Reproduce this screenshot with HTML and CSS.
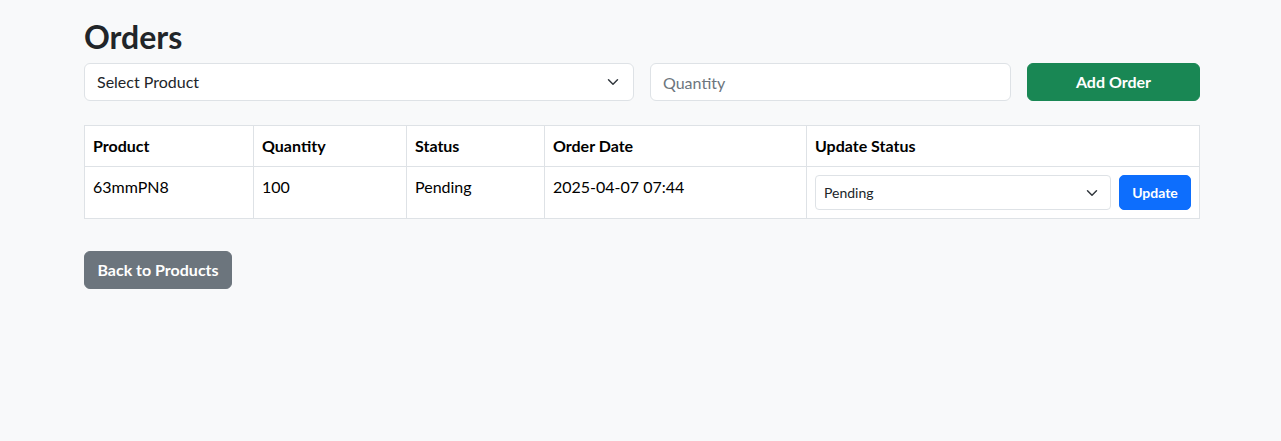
FILE: index.html
```html
<!DOCTYPE html>
<html lang="en">
<head>
<meta charset="utf-8">
<title>Orders</title>
<link rel="stylesheet" href="styles.css">
</head>
<body>
<div class="container">
  <h2 class="title">Orders</h2>
  <form class="order-form">
    <div class="select-wrap">
      <select class="form-select">
        <option>Select Product</option>
      </select>
    </div>
    <input class="form-control" type="text" placeholder="Quantity">
    <button type="button" class="btn btn-success">Add Order</button>
  </form>

  <div class="table-wrap">
    <table class="orders">
      <colgroup>
        <col class="c1"><col class="c2"><col class="c3"><col class="c4"><col class="c5">
      </colgroup>
      <thead>
        <tr>
          <th>Product</th>
          <th>Quantity</th>
          <th>Status</th>
          <th>Order Date</th>
          <th>Update Status</th>
        </tr>
      </thead>
      <tbody>
        <tr>
          <td>63mmPN8</td>
          <td>100</td>
          <td>Pending</td>
          <td>2025-04-07 07:44</td>
          <td>
            <div class="update">
              <select class="form-select form-select-sm">
                <option>Pending</option>
              </select>
              <button type="button" class="btn btn-primary btn-sm">Update</button>
            </div>
          </td>
        </tr>
      </tbody>
    </table>
  </div>

  <div class="actions">
    <button type="button" class="btn btn-secondary back">Back to Products</button>
  </div>
</div>
</body>
</html>
```

FILE: styles.css
```css
* { box-sizing: border-box; }

html, body {
  margin: 0;
  background: #f8f9fa;
  color: #212529;
  font-family: "Lato", "Liberation Sans", sans-serif;
  font-size: 16px;
  line-height: 1.5;
}

.container {
  width: 1116px;
  margin-left: 84px;
  padding-top: 18px;
}

.title {
  margin: 0 0 7px;
  font-size: 32px;
  font-weight: 700;
  line-height: 1.2;
  color: #212529;
}

.order-form {
  display: grid;
  grid-template-columns: 550px 361px 1fr;
  gap: 16px;
}

.form-select,
.form-control {
  display: block;
  width: 100%;
  height: 38px;
  padding: 6px 12px;
  font-family: inherit;
  font-size: 16px;
  line-height: 1.5;
  color: #212529;
  background-color: #fff;
  border: 1px solid #dee2e6;
  border-radius: 6px;
  appearance: none;
  -webkit-appearance: none;
  outline: none;
}

.form-select {
  padding-right: 36px;
  background-image: url("data:image/svg+xml,%3csvg xmlns='http://www.w3.org/2000/svg' viewBox='0 0 16 16'%3e%3cpath fill='none' stroke='%23343a40' stroke-linecap='round' stroke-linejoin='round' stroke-width='2' d='m2 5 6 6 6-6'/%3e%3c/svg%3e");
  background-repeat: no-repeat;
  background-position: right 12px center;
  background-size: 16px 12px;
}

.form-control::placeholder { color: #6c757d; }

.btn {
  display: inline-block;
  height: 38px;
  padding: 6px 12px;
  font-family: inherit;
  font-size: 16px;
  font-weight: 700;
  line-height: 1.5;
  color: #fff;
  border: 1px solid transparent;
  border-radius: 6px;
  cursor: pointer;
}

.btn-success { background: #198754; border-color: #198754; width: 100%; }
.btn-primary { background: #0d6efd; border-color: #0d6efd; }
.btn-secondary { background: #6c757d; border-color: #6c757d; }

.table-wrap {
  padding-top: 24px;
  padding-bottom: 16px;
}

.actions {
  display: flex;
  padding-top: 16px;
}

.back { width: 148px; }

.orders {
  width: 100%;
  margin: 0;
  border-collapse: collapse;
  background: #fff;
  color: #000;
}

.orders col.c1 { width: 169px; }
.orders col.c2 { width: 153px; }
.orders col.c3 { width: 138px; }
.orders col.c4 { width: 262px; }

.orders th,
.orders td {
  border: 1px solid #dee2e6;
  padding: 8px;
  text-align: left;
  vertical-align: top;
  line-height: 24px;
}

.orders th { font-weight: 700; }

.update {
  display: flex;
  gap: 8px;
}

.form-select-sm {
  height: 35px;
  font-size: 14px;
  padding: 5px 32px 5px 8px;
  border-radius: 4px;
  background-position: right 10px center;
  flex: 1;
}

.btn-sm {
  height: 35px;
  width: 72px;
  font-size: 14px;
  padding: 4px 8px;
  border-radius: 5px;
}
```
